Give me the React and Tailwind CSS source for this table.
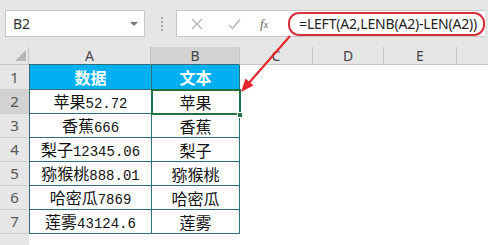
const rows = [
  ['苹果', '52.72', '苹果'],
  ['香蕉', '666', '香蕉'],
  ['梨子', '12345.06', '梨子'],
  ['猕猴桃', '888.01', '猕猴桃'],
  ['哈密瓜', '7869', '哈密瓜'],
  ['莲雾', '43124.6', '莲雾'],
];

const cols = ['C', 'D', 'E'];
const colWidths = ['w-[73px]', 'w-[71px]', 'w-[73px]'];

function RowHead({ n, active }) {
  return (
    <div
      className={`flex items-center justify-center w-[29px] shrink-0 border-b border-[#cfcfcf] text-[15px] text-[#555] ${
        active ? 'bg-[#d2d2d2]' : 'bg-[#e6e6e6]'
      }`}
    >
      {n}
    </div>
  );
}

function Blank() {
  return (
    <>
      <div className="w-[73px] shrink-0" />
      <div className="w-[71px] shrink-0" />
      <div className="w-[73px] shrink-0" />
      <div className="flex-1" />
    </>
  );
}

export default function App() {
  return (
    <div className="relative w-[488px] h-[245px] overflow-hidden bg-white font-['Noto_Sans','Noto_Sans_CJK_SC',sans-serif]">
      {/* formula bar */}
      <div className="flex items-center h-[47px] bg-[#e6e6e6] pl-[5px] pr-[3px]">
        <div className="flex items-center justify-between w-[140px] h-[27px] bg-white border border-[#c8c8c8] pl-[7px] pr-[6px]">
          <span className="text-[14px] text-[#333]">B2</span>
          <span className="w-0 h-0 border-x-[4px] border-x-transparent border-t-[4px] border-t-[#777]" />
        </div>
        <div className="flex flex-col gap-[2px] ml-[16px] mr-[13px]">
          <span className="w-[2px] h-[2px] bg-[#a8a8a8]" />
          <span className="w-[2px] h-[2px] bg-[#a8a8a8]" />
          <span className="w-[2px] h-[2px] bg-[#a8a8a8]" />
          <span className="w-[2px] h-[2px] bg-[#a8a8a8]" />
        </div>
        <div className="flex items-center flex-1 h-[27px] bg-white border border-[#c8c8c8] border-r-0">
          <svg width="12" height="12" viewBox="0 0 12 12" className="ml-[14px]">
            <path d="M1 1 L11 11 M11 1 L1 11" stroke="#b4b4b4" strokeWidth="1.4" fill="none" />
          </svg>
          <svg width="13" height="12" viewBox="0 0 13 12" className="ml-[25px]">
            <path d="M1 7 L4.5 10.5 L12 1.5" stroke="#b4b4b4" strokeWidth="1.4" fill="none" />
          </svg>
          <span className="ml-[19px] font-['Liberation_Serif',serif] italic text-[13px] text-[#666]">
            f<span className="text-[10px]">x</span>
          </span>
          <div className="flex items-center ml-[20px] h-[24px] flex-1 border-2 border-[#d8303a] rounded-[11px] pl-[9px] text-[14px] text-[#222] tracking-[-0.2px]">
            =LEFT(A2,LENB(A2)-LEN(A2))
          </div>
        </div>
      </div>

      {/* column headers */}
      <div className="flex h-[18px] bg-[#e6e6e6] text-[14px] text-[#444] leading-none">
        <div className="relative w-[29px] shrink-0 border-r border-b border-[#c6c6c6]">
          <span className="absolute right-[2px] bottom-[3px] w-0 h-0 border-l-[11px] border-l-transparent border-b-[11px] border-b-[#b5b5b5]" />
        </div>
        <div className="flex items-center justify-center w-[122px] shrink-0 border-r border-[#c6c6c6] border-b border-b-[#2f6d7c]">A</div>
        <div className="flex items-center justify-center w-[89px] shrink-0 bg-[#d2d2d2] border-r border-[#c6c6c6] border-b border-b-[#2f6d7c]">B</div>
        {cols.map((c, i) => (
          <div key={c} className={`flex items-center justify-center ${colWidths[i]} shrink-0 border-r border-b border-[#c6c6c6]`}>
            {c}
          </div>
        ))}
        <div className="flex-1 border-b border-[#c6c6c6]" />
      </div>

      {/* row 1 */}
      <div className="flex h-[25px]">
        <RowHead n={1} />
        <div className="flex items-center justify-center w-[123px] shrink-0 bg-[#00b0f0] border-l border-r border-b border-[#2f6d7c] text-white text-[16px] font-bold font-['Noto_Sans_CJK_SC',sans-serif]">
          数据
        </div>
        <div className="flex items-center justify-center w-[88px] shrink-0 bg-[#00b0f0] border-r border-b border-[#2f6d7c] text-white text-[16px] font-bold font-['Noto_Sans_CJK_SC',sans-serif]">
          文本
        </div>
        <Blank />
      </div>

      {/* data rows */}
      {rows.map(([name, num, text], i) => (
        <div key={i} className="flex h-[24px]">
          <RowHead n={i + 2} active={i === 0} />
          <div className="flex items-center justify-center w-[123px] shrink-0 border-l border-r border-b border-[#2f6d7c] text-[16px] text-[#111] font-['Noto_Sans_CJK_SC',sans-serif]">
            <span className="leading-none">
              {name}
              <span className="font-['Liberation_Mono',monospace] text-[14px]">{num}</span>
            </span>
          </div>
          <div className="relative flex items-center justify-center w-[88px] shrink-0 border-r border-b border-[#2f6d7c] text-[16px] text-[#111] font-['Noto_Sans_CJK_SC',sans-serif]">
            {text}
            {i === 0 && (
              <>
                <span className="absolute -left-[1px] -top-[1px] -right-[2px] -bottom-[2px] z-10 border-2 border-[#217346]" />
                <span className="absolute -right-[4px] -bottom-[5px] z-20 w-[6px] h-[6px] bg-[#217346] border border-white" />
              </>
            )}
          </div>
          <Blank />
        </div>
      ))}

      {/* row 8 */}
      <div className="flex h-[24px]">
        <div className="w-[29px] shrink-0 bg-[#e6e6e6]" />
        <div className="flex-1" />
      </div>

      {/* annotation arrow */}
      <svg className="absolute inset-0 pointer-events-none" width="488" height="245" viewBox="0 0 488 245">
        <line x1="290" y1="36" x2="248" y2="84" stroke="#e3262c" strokeWidth="2" />
        <polygon points="241,92 253.5,85.5 245.5,78.5" fill="#e3262c" />
      </svg>
    </div>
  );
}
